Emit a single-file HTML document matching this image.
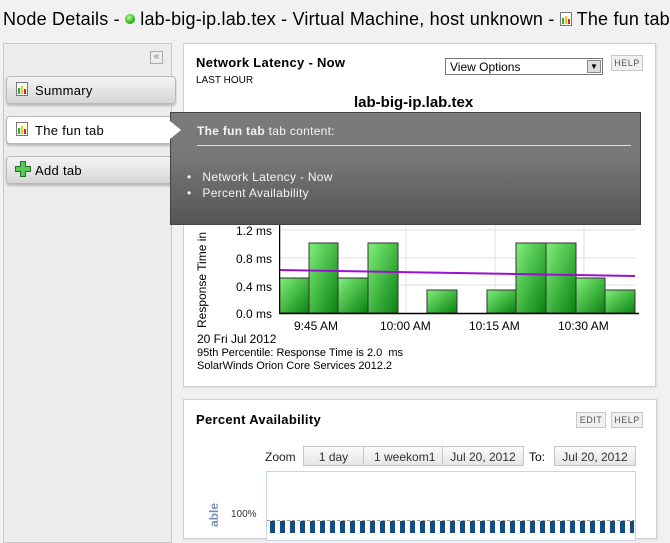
<!DOCTYPE html>
<html><head><meta charset="utf-8"><style>
*{margin:0;padding:0;box-sizing:border-box}
body{width:670px;height:532px;overflow:hidden;background:#f1f1f1;font-family:"Liberation Sans","DejaVu Sans",sans-serif;position:relative;color:#000}
.abs{position:absolute}
h1{position:absolute;left:3px;top:9px;font-size:18px;font-weight:normal;white-space:nowrap;letter-spacing:0.2px}
.side{left:3px;top:43px;width:169px;height:500px;background:#ececec;border:1px solid #c8c8c8}
.tab{position:absolute;left:6px;width:170px;height:28px;border:1px solid #b8b8b8;border-radius:4px;background:linear-gradient(#f4f4f4,#d6d6d6);font-size:13px;padding:6px 0 0 28px;box-shadow:0 2px 2px #bbb;letter-spacing:0.3px}
.panel{background:#fff;border:1px solid #cfcfcf;box-shadow:1px 1px 2px #ddd}
.btn{position:absolute;border:1px solid #c8c8c8;background:#f0f0f0;font-size:9px;color:#555;text-align:center;letter-spacing:0.5px}
.tip{left:170px;top:112px;width:471px;height:113px;background:linear-gradient(#7b7b7b,#777 40%,#555);border:1px solid #444;color:#f4f4f4;font-size:12px;letter-spacing:0.3px}
.ylab{position:absolute;font-size:12px;text-align:right;width:50px}
.xl{position:absolute;font-size:12px;top:319px}
.zb{position:absolute;top:446px;height:20px;border:1px solid #c6c6c6;background:linear-gradient(#fafafa,#e6e6e6);font-size:12px;color:#333;text-align:center;padding-top:3px}
</style></head><body>
<h1>Node Details - <span style="display:inline-block;width:10px;height:10px;border-radius:50%;background:radial-gradient(circle at 40% 35%,#b6ff9a,#2ab51a 60%,#18800c);vertical-align:1px"></span> lab-big-ip.lab.tex - Virtual Machine, host unknown - <svg width="12" height="14" style="vertical-align:-1px"><rect x=".5" y=".5" width="11" height="13" fill="#fff" stroke="#777"/><rect x="2" y="6" width="2" height="6" fill="#3a3"/><rect x="5" y="4" width="2" height="8" fill="#ec0"/><rect x="8" y="7" width="2" height="5" fill="#d22"/></svg> The fun tab</h1>

<div class="abs side"></div>
<div class="abs" style="left:150px;top:51px;width:13px;height:13px;border:1px solid #aaa;background:#eee;font-size:10px;color:#777;line-height:10px;text-align:center">«</div>
<div class="tab" style="top:76px"><svg class="abs" style="left:9px;top:5px" width="12" height="14"><rect x=".5" y=".5" width="11" height="13" fill="#fff" stroke="#777"/><rect x="2" y="6" width="2" height="6" fill="#3a3"/><rect x="5" y="4" width="2" height="8" fill="#ec0"/><rect x="8" y="7" width="2" height="5" fill="#d22"/></svg>Summary</div>
<div class="tab" style="top:116px;background:#fff"><svg class="abs" style="left:9px;top:5px" width="12" height="14"><rect x=".5" y=".5" width="11" height="13" fill="#fff" stroke="#777"/><rect x="2" y="6" width="2" height="6" fill="#3a3"/><rect x="5" y="4" width="2" height="8" fill="#ec0"/><rect x="8" y="7" width="2" height="5" fill="#d22"/></svg>The fun tab</div>
<div class="tab" style="top:156px"><svg class="abs" style="left:8px;top:4px" width="16" height="16"><path d="M5.5 .5h5v5h5v5h-5v5h-5v-5h-5v-5h5z" fill="#5c5" stroke="#286a28"/></svg>Add tab</div>

<div class="abs panel" style="left:183px;top:43px;width:473px;height:344px"></div>
<div class="abs" style="left:196px;top:55px;font-size:13px;font-weight:bold;letter-spacing:0.3px">Network Latency - Now</div>
<div class="abs" style="left:196px;top:75px;font-size:10px">LAST HOUR</div>
<div class="abs" style="left:445px;top:58px;width:158px;height:17px;border:1px solid #777;background:#fff;font-size:12px;padding:1px 0 0 4px">View Options<div class="abs" style="right:1px;top:1px;width:14px;height:13px;background:#ddd;border:1px solid #888;font-size:8px;text-align:center;line-height:12px">▼</div></div>
<div class="btn" style="left:611px;top:55px;width:32px;height:16px;padding-top:2px">HELP</div>
<div class="abs" style="left:354px;top:94px;font-size:15px;font-weight:bold">lab-big-ip.lab.tex</div>

<svg class="abs" style="left:279px;top:225px" width="360" height="92">
<g stroke="#e2e2e2"><line x1="127" y1="0" x2="127" y2="88"/><line x1="216" y1="0" x2="216" y2="88"/><line x1="305" y1="0" x2="305" y2="88"/><line x1="0" y1="5" x2="356" y2="5"/><line x1="0" y1="33" x2="356" y2="33"/><line x1="0" y1="60" x2="356" y2="60"/></g>
<defs><linearGradient id="g" x1="0" y1="0" x2="1" y2="1"><stop offset="0" stop-color="#80f07a"/><stop offset="1" stop-color="#08820f"/></linearGradient></defs>
<g fill="url(#g)" stroke="#333">
<rect x=".5" y="53" width="30" height="35"/><rect x="30" y="18" width="29" height="70"/><rect x="59" y="53" width="30" height="35"/><rect x="89" y="18" width="30" height="70"/><rect x="148" y="65" width="30" height="23"/><rect x="208" y="65" width="29" height="23"/><rect x="237" y="18" width="30" height="70"/><rect x="267" y="18" width="30" height="70"/><rect x="297" y="53" width="29" height="35"/><rect x="326" y="65" width="30" height="23"/></g>
<line x1="0" y1="45" x2="356" y2="51" stroke="#9a10d0" stroke-width="2"/>
<path d="M.5 0V88.5H360" fill="none" stroke="#000" stroke-width="1.5"/>
</svg>
<div class="ylab" style="left:222px;top:224px">1.2 ms</div>
<div class="ylab" style="left:222px;top:252px">0.8 ms</div>
<div class="ylab" style="left:222px;top:280px">0.4 ms</div>
<div class="ylab" style="left:222px;top:307px">0.0 ms</div>
<div class="abs" style="left:195px;top:328px;font-size:12px;transform:rotate(-90deg);transform-origin:0 0;white-space:nowrap">Response Time in</div>
<div class="xl" style="left:294px">9:45 AM</div>
<div class="xl" style="left:380px">10:00 AM</div>
<div class="xl" style="left:469px">10:15 AM</div>
<div class="xl" style="left:558px">10:30 AM</div>
<div class="abs" style="left:197px;top:332px;font-size:12px;line-height:14px">20 Fri Jul 2012<br><span style="font-size:11px;line-height:13px;display:block;margin-top:1px">95th Percentile: Response Time is 2.0&nbsp; ms<br>SolarWinds Orion Core Services 2012.2</span></div>

<div class="abs tip">
<div style="position:absolute;left:26px;top:11px"><b>The fun tab</b> tab content:</div>
<div style="position:absolute;left:26px;top:32px;width:434px;border-top:1px solid #e0e0e0"></div>
<div style="position:absolute;left:16px;top:56px;line-height:16px">• &nbsp;&nbsp;Network Latency - Now<br>• &nbsp;&nbsp;Percent Availability</div></div>
<div class="abs" style="left:170px;top:121px;width:0;height:0;border-top:9px solid transparent;border-bottom:9px solid transparent;border-left:11px solid #fff"></div>

<div class="abs panel" style="left:183px;top:399px;width:474px;height:140px"></div>
<div class="abs" style="left:196px;top:412px;font-size:13px;font-weight:bold;letter-spacing:0.3px">Percent Availability</div>
<div class="btn" style="left:576px;top:412px;width:30px;height:16px;padding-top:2px">EDIT</div>
<div class="btn" style="left:611px;top:412px;width:32px;height:16px;padding-top:2px">HELP</div>
<div class="abs" style="left:265px;top:450px;font-size:12px;color:#222">Zoom</div>
<div class="zb" style="left:303px;width:61px">1 day</div>
<div class="zb" style="left:363px;width:80px;text-align:left;padding-left:10px">1 weekom1</div>
<div class="zb" style="left:442px;width:82px">Jul 20, 2012</div>
<div class="abs" style="left:529px;top:450px;font-size:12px">To:</div>
<div class="zb" style="left:554px;width:82px">Jul 20, 2012</div>
<div class="abs" style="left:266px;top:471px;width:370px;height:70px;background:#fff;border:1px solid #c8d4e0"></div>
<div class="abs" style="left:231px;top:509px;font-size:10px;color:#333">100%</div>
<div class="abs" style="left:207px;top:527px;font-size:12px;font-weight:bold;color:#7890b0;transform:rotate(-90deg);transform-origin:0 0">able</div>
<div class="abs" style="left:267px;top:520px;width:368px;height:1px;border-top:1px dashed #999"></div>
<div class="abs" style="left:270px;top:521px;width:364px;height:12px;background:repeating-linear-gradient(90deg,#134d82 0 5px,transparent 5px 10px)"></div>
</body></html>
